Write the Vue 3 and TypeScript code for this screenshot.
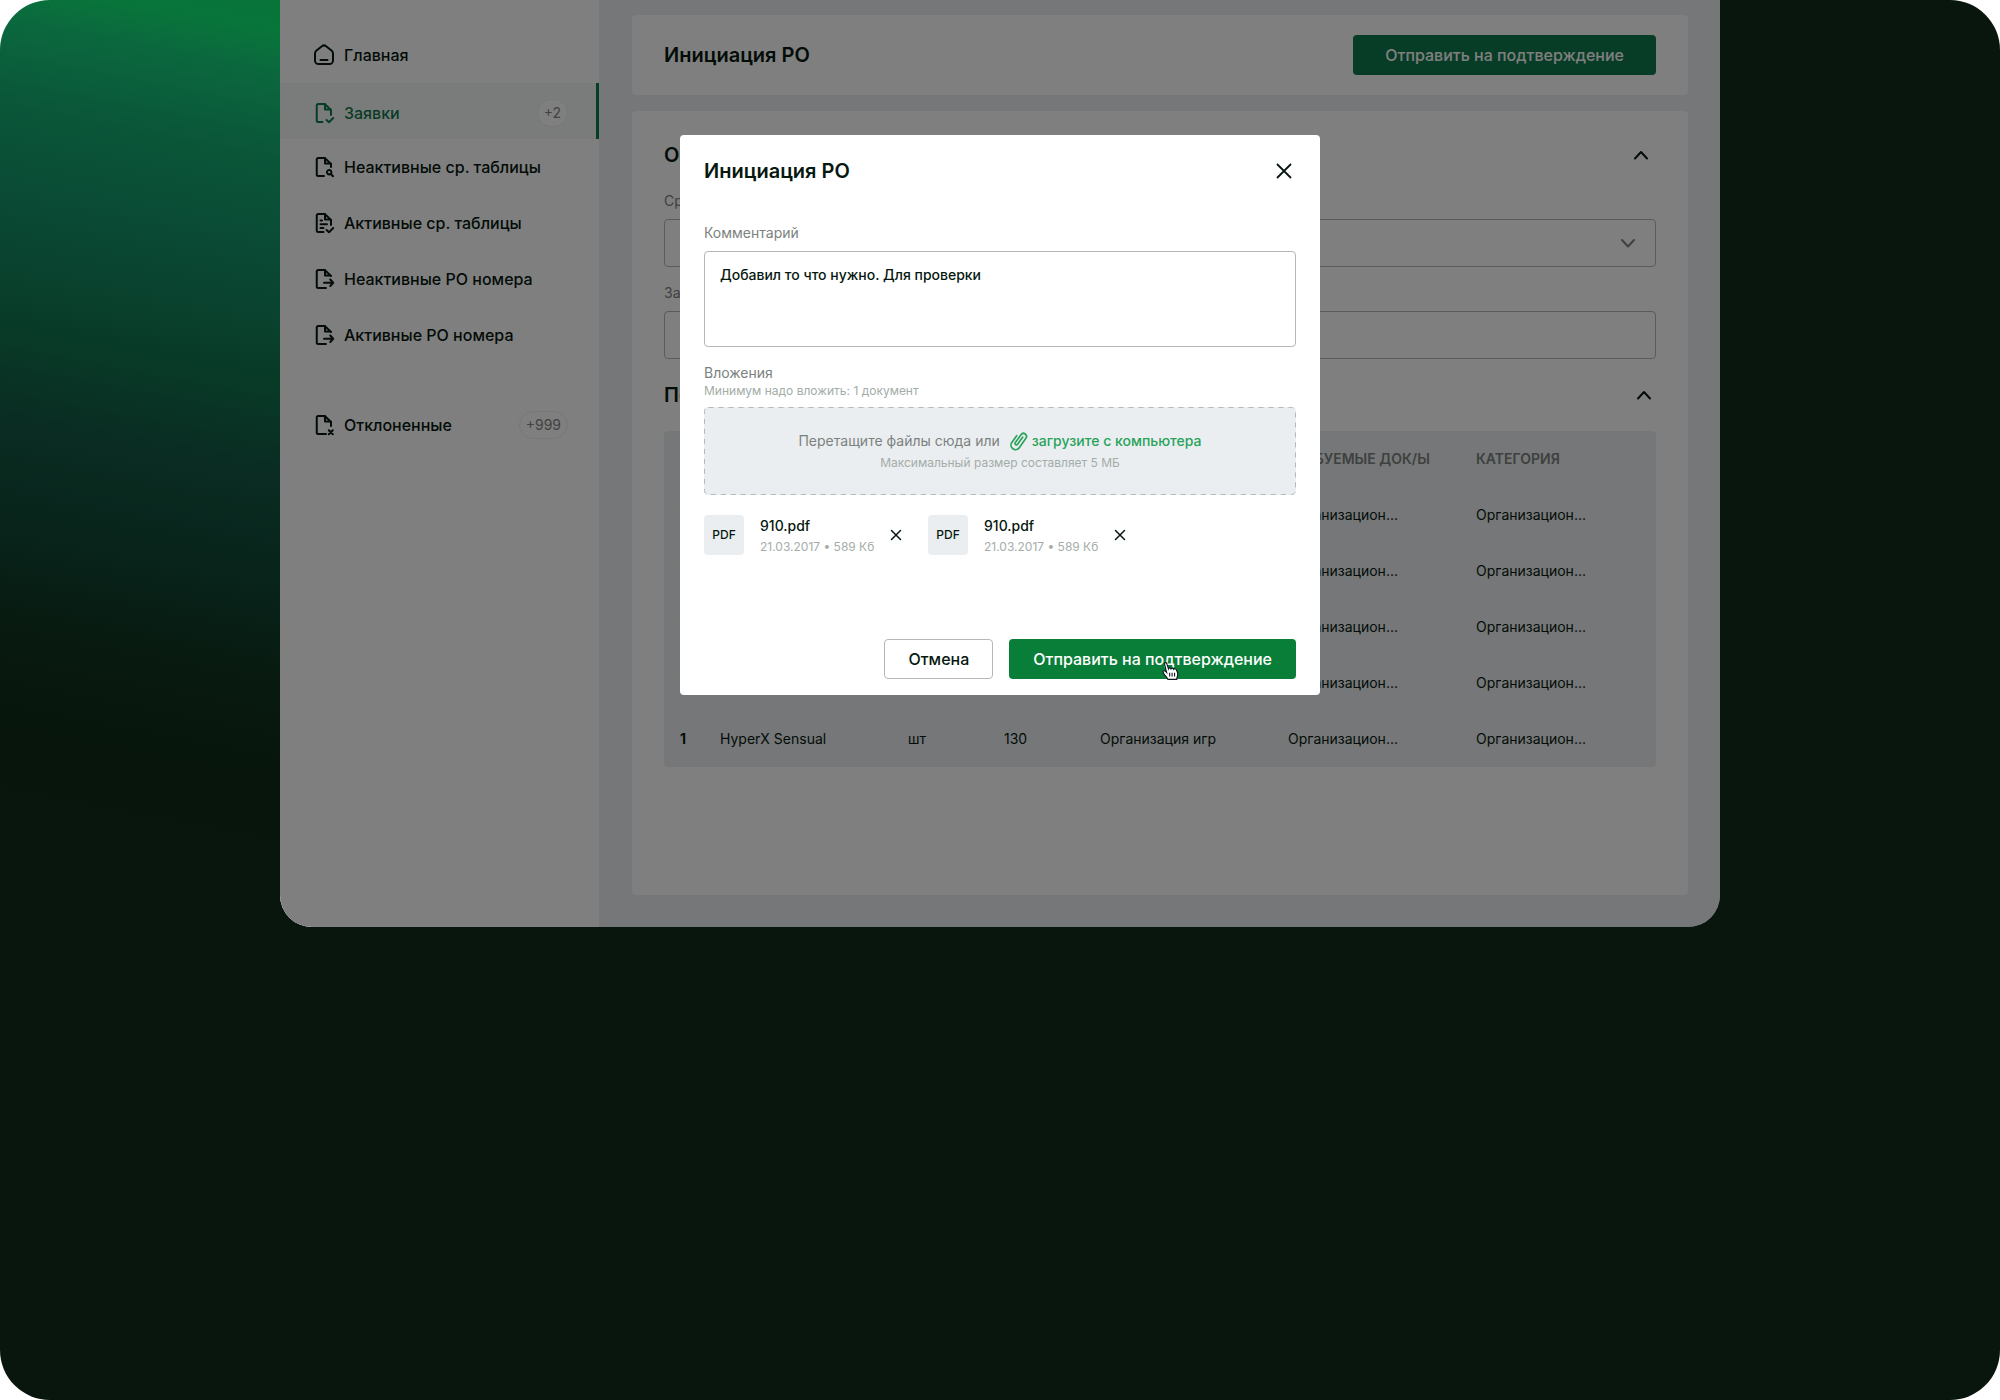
<script setup lang="ts">
import { ref } from 'vue'

type IconName = 'home' | 'check' | 'search' | 'list' | 'arrow' | 'cross'

interface NavItem {
  label: string
  icon: IconName
  badge?: string
  active?: boolean
  separated?: boolean
}

interface Attachment {
  id: number
  name: string
  meta: string
}

const nav: NavItem[] = [
  { label: 'Главная', icon: 'home' },
  { label: 'Заявки', icon: 'check', badge: '+2', active: true },
  { label: 'Неактивные ср. таблицы', icon: 'search' },
  { label: 'Активные ср. таблицы', icon: 'list' },
  { label: 'Неактивные РО номера', icon: 'arrow' },
  { label: 'Активные РО номера', icon: 'arrow' },
  { label: 'Отклоненные', icon: 'cross', badge: '+999', separated: true },
]

const icons: Record<IconName, string[]> = {
  home: [
    'M3 10.600c0-1.300.5-2.300 1.500-3.100l5.400-4.300a3.400 3.400 0 0 1 4.200 0l5.400 4.300c1 .8 1.500 1.800 1.500 3.100v6.800a3.600 3.600 0 0 1-3.600 3.600H6.600a3.600 3.600 0 0 1-3.600-3.600z',
    'M8.500 17h7',
  ],
  check: [
    'M10.500 21H6.250a1.500 1.500 0 0 1-1.500-1.500V4.500a1.500 1.500 0 0 1 1.500-1.500h6.500l6.250 6V14',
    'M13 3v5.500h5.500',
    'M14.500 19l2.500 2.250 4.250-4.250',
  ],
  search: [
    'M12 21H6.250a1.500 1.500 0 0 1-1.500-1.500V4.500a1.500 1.500 0 0 1 1.500-1.500h6.500l6.250 6V12',
    'M13 3v5.500h5.500',
    'M15 17.200a2.200 2.200 0 1 0 4.400 0a2.200 2.200 0 1 0-4.400 0M18.800 18.800l2.200 2.450',
  ],
  list: [
    'M11.500 21H6.250a1.500 1.500 0 0 1-1.500-1.500V4.500a1.500 1.500 0 0 1 1.500-1.500h6.500l6.250 6V14',
    'M13 3v5.500h5.500',
    'M8.500 9.500h1.500M8.500 13.250h6.500M8.500 17h3',
    'M14.500 19l2.500 2.250 4.250-4.250',
  ],
  arrow: [
    'M14 21H6.250a1.500 1.500 0 0 1-1.500-1.500V4.500a1.500 1.500 0 0 1 1.500-1.500h6.500l6.250 6',
    'M13 3v5.500h5.500',
    'M12 15.750h9M18.250 12.500l3 3.250-3 3.250',
  ],
  cross: [
    'M14 21H6.250a1.500 1.500 0 0 1-1.500-1.500V4.500a1.500 1.500 0 0 1 1.500-1.500h6.500l6.250 6V13',
    'M13 3v5.500h5.500',
    'M16.800 17.250l4 4M20.800 17.250l-4 4',
  ],
}

const columns: string[] = ['№', 'НАИМЕНОВАНИЕ', 'ЕД.', 'КОЛ-ВО', 'ОРГАНИЗАЦИЯ', 'ТРЕБУЕМЫЕ ДОК/Ы', 'КАТЕГОРИЯ']
const row: string[] = ['1', 'HyperX Sensual', 'шт', '130', 'Организация игр', 'Организацион...', 'Организацион...']
const rows: string[][] = Array.from({ length: 5 }, () => row)

const comment = ref('Добавил то что нужно. Для проверки')
const files = ref<Attachment[]>([
  { id: 1, name: '910.pdf', meta: '21.03.2017 • 589 Кб' },
  { id: 2, name: '910.pdf', meta: '21.03.2017 • 589 Кб' },
])

function removeFile(id: number): void {
  files.value = files.value.filter((file) => file.id !== id)
}
</script>

<template>
  <div class="page">
    <div class="window">
      <aside class="sidebar">
        <nav>
          <a
            v-for="item in nav"
            :key="item.label"
            href="#"
            class="nav-item"
            :class="{ 'nav-item--active': item.active, 'nav-item--separated': item.separated }"
          >
            <svg class="icon" viewBox="0 0 24 24" aria-hidden="true">
              <path v-for="d in icons[item.icon]" :key="d" :d="d" />
            </svg>
            <span class="nav-label">{{ item.label }}</span>
            <span v-if="item.badge" class="badge">{{ item.badge }}</span>
          </a>
        </nav>
      </aside>

      <main class="content">
        <header class="card topbar">
          <h1 class="title">Инициация РО</h1>
          <button type="button" class="btn btn--primary btn--wide">Отправить на подтверждение</button>
        </header>

        <section class="card details">
          <div class="section-head section-head--form">
            <h2 class="title">Основная информация</h2>
            <button type="button" class="icon-btn" aria-label="Свернуть">
              <svg class="icon" viewBox="0 0 24 24"><path d="M6 15.500l6-6.500 6 6.500" /></svg>
            </button>
          </div>

          <label class="label" for="compare-table">Сравнительная таблица</label>
          <div class="select-wrap">
            <select id="compare-table" class="field"><option></option></select>
            <svg class="icon select-arrow" viewBox="0 0 24 24" aria-hidden="true"><path d="M6 9l6 6.500 6-6.500" /></svg>
          </div>

          <label class="label label--next" for="heading">Заголовок</label>
          <input id="heading" class="field" type="text" />

          <div class="section-head section-head--table">
            <h2 class="title">Позиции</h2>
            <button type="button" class="icon-btn" aria-label="Свернуть">
              <svg class="icon" viewBox="0 0 24 24"><path d="M6 15.500l6-6.500 6 6.500" /></svg>
            </button>
          </div>

          <table class="table">
            <colgroup>
              <col class="col-num" />
              <col class="col-wide" />
              <col class="col-short" />
              <col class="col-short" />
              <col class="col-wide" />
              <col class="col-wide" />
              <col />
            </colgroup>
            <thead>
              <tr>
                <th v-for="column in columns" :key="column" scope="col">{{ column }}</th>
              </tr>
            </thead>
            <tbody>
              <tr v-for="(cells, index) in rows" :key="index">
                <td v-for="(cell, cellIndex) in cells" :key="cellIndex">{{ cell }}</td>
              </tr>
            </tbody>
          </table>
        </section>
      </main>

      <div class="overlay">
        <div class="modal" role="dialog" aria-modal="true" aria-labelledby="modal-title">
          <div class="modal-head">
            <h2 id="modal-title" class="title">Инициация РО</h2>
            <button type="button" class="icon-btn" aria-label="Закрыть">
              <svg class="icon icon--close" viewBox="0 0 24 24"><path d="M5.500 5.500l13 13M18.500 5.500l-13 13" /></svg>
            </button>
          </div>

          <label class="label" for="comment">Комментарий</label>
          <textarea id="comment" v-model="comment" class="comment"></textarea>

          <p class="label attachments-label">Вложения</p>
          <p class="hint">Минимум надо вложить: 1 документ</p>

          <div class="dropzone">
            <svg class="drop-border" aria-hidden="true"><rect x="0.5" y="0.5" rx="4" /></svg>
            <div class="drop-line">
              <span>Перетащите файлы сюда или</span>
              <button type="button" class="upload">
                <svg class="clip" viewBox="0 1 18 18" aria-hidden="true">
                  <path d="M13.200 6.600L8.600 13a1.300 1.300 0 0 1-2.100-1.500l5.200-7.200a2.700 2.700 0 0 1 4.400 3.200l-6.100 8.700a4.100 4.100 0 0 1-6.700-4.700l4.500-6.300" />
                </svg>
                <span>загрузите с компьютера</span>
              </button>
            </div>
            <p class="hint">Максимальный размер составляет 5 МБ</p>
          </div>

          <ul class="files">
            <li v-for="file in files" :key="file.id" class="file">
              <span class="file-type">PDF</span>
              <span class="file-info">
                <span class="file-name">{{ file.name }}</span>
                <span class="hint">{{ file.meta }}</span>
              </span>
              <button type="button" class="file-remove" aria-label="Удалить файл" @click="removeFile(file.id)">
                <svg class="icon-small" viewBox="0 0 16 16"><path d="M3.500 3.500l9 9M12.500 3.500l-9 9" /></svg>
              </button>
            </li>
          </ul>

          <div class="actions">
            <button type="button" class="btn btn--outline">Отмена</button>
            <button type="button" class="btn btn--primary btn--hover">
              Отправить на подтверждение
              <svg class="cursor" viewBox="0 0 16 18" aria-hidden="true">
                <path d="M5.200 16.500c-.3-1.200-1.200-2-2.200-3.200C1.900 12.200.8 10.700.8 9.700c0-.9 1.400-1.300 2.300-.3l1 1L2.200 2.900C1.900 1.600 3.700.9 4.200 2.300L5.700 7c.3-1.200 1.900-1.100 2.300.1.500-1.100 2-.8 2.400.4.600-.9 2-.6 2.400.5.400.9 1.400 2.500 1.300 4.100-.1 1.700-.9 2.600-.9 4.400z" />
                <path d="M6.800 10.500v3.500M9 10.500v3.500M11.200 10.500v3.500" />
              </svg>
            </button>
          </div>
        </div>
      </div>
    </div>
  </div>
</template>

<style>
body {
  margin: 0;
  background: #ffffff;
}
</style>

<style scoped>
* {
  box-sizing: border-box;
}

.page {
  min-height: 100vh;
  border-radius: 50px;
  color: #07180f;
  font-family: Inter, "Noto Sans", sans-serif;
  font-size: 14px;
  line-height: 20px;
  background:
    linear-gradient(
      191deg,
      #08743a 60px,
      #08753a 92px,
      #0b683e 132px,
      #0a5639 216px,
      #0a4834 324px,
      #083b27 432px,
      #0a2d23 520px,
      #08231a 638px,
      #08190f 740px,
      #07150c 840px,
      #09160d 950px
    )
    left top / 30% 100% no-repeat #09160d;
}

button,
input,
select,
textarea {
  font: inherit;
  color: inherit;
}

button {
  padding: 0;
  border: 0;
  background: none;
  cursor: pointer;
}

p,
h1,
h2,
ul {
  margin: 0;
  padding: 0;
}

.window {
  position: relative;
  display: flex;
  width: 72%;
  min-width: 1200px;
  margin: 0 auto;
  overflow: hidden;
  border-radius: 0 0 32px 32px;
  background: #ebeef1;
}

.icon {
  flex: none;
  display: block;
  width: 24px;
  height: 24px;
  fill: none;
  stroke: currentColor;
  stroke-width: 2;
  stroke-linecap: round;
  stroke-linejoin: round;
}

.icon--close {
  stroke-width: 1.8;
}

/* Sidebar */
.sidebar {
  flex: none;
  width: 319px;
  padding-top: 27px;
  background: #ffffff;
}

.nav-item {
  display: flex;
  align-items: center;
  gap: 8px;
  height: 56px;
  padding: 0 31px 0 32px;
  color: inherit;
  font-size: 16px;
  line-height: 24px;
  font-weight: 500;
  text-decoration: none;
}

.nav-item--active {
  padding-top: 4px;
  padding-right: 28px;
  border-right: 3px solid #0f7a4c;
  background: #f5f8f7;
  color: #0f7a4c;
}

.nav-item--separated {
  margin-top: 34px;
}

.nav-label {
  flex: 1;
}

.badge {
  min-width: 29px;
  padding: 0 6px;
  border: 1px solid #ebeef1;
  border-radius: 15px;
  background: #ffffff;
  color: #808682;
  font-size: 14px;
  line-height: 26px;
  font-weight: 400;
  text-align: center;
}

/* Page content */
.content {
  flex: 1;
  min-width: 0;
  padding: 15px 32px 32px 33px;
}

.card {
  border-radius: 4px;
  background: #ffffff;
}

.title {
  font-size: 20px;
  line-height: 24px;
  font-weight: 600;
}

.topbar {
  display: flex;
  align-items: center;
  justify-content: space-between;
  padding: 20px 32px;
}

.btn {
  height: 40px;
  padding: 0 24px;
  border-radius: 4px;
  font-size: 16px;
  line-height: 24px;
  font-weight: 500;
  white-space: nowrap;
}

.btn--primary {
  background: #0f7a4c;
  color: #ffffff;
}

.btn--wide {
  padding: 0 32px;
}

.btn--outline {
  padding: 0 23px;
  border: 1px solid #b4b9b6;
  background: #ffffff;
}

.btn--hover {
  position: relative;
  background: #097e38;
}

.details {
  margin-top: 16px;
  padding: 32px 32px 128px;
}

.section-head,
.modal-head {
  display: flex;
  align-items: center;
  justify-content: space-between;
  height: 24px;
}

.section-head--form {
  margin-bottom: 24px;
  padding-right: 3px;
}

.section-head--table {
  margin: 24px 0;
}

.label {
  display: block;
  margin-bottom: 8px;
  color: #7b827e;
  font-size: 14px;
  line-height: 20px;
}

.label--next {
  margin-top: 16px;
}

.select-wrap {
  position: relative;
}

.field {
  display: block;
  width: 100%;
  height: 48px;
  padding: 0 16px;
  border: 1px solid #b4b9b6;
  border-radius: 4px;
  background: #ffffff;
  appearance: none;
}

.select-arrow {
  position: absolute;
  top: 12px;
  right: 16px;
  color: #7b827e;
}

.table {
  width: 100%;
  border-spacing: 0;
  table-layout: fixed;
  border-radius: 4px;
  background: #ebeef1;
}

.col-num {
  width: 56px;
}

.col-wide {
  width: 188px;
}

.col-short {
  width: 96px;
}

.table th,
.table td {
  height: 56px;
  padding: 0;
  text-align: left;
  white-space: nowrap;
}

.table th {
  color: #7b827e;
  font-weight: 600;
}

.table th:first-child,
.table td:first-child {
  padding-left: 16px;
}

.table td:first-child {
  font-weight: 700;
}

/* Dialog */
.overlay {
  position: absolute;
  inset: 0;
  padding-top: 135px;
  background: rgba(0, 0, 0, 0.5);
}

.modal {
  width: 640px;
  margin: 0 auto;
  padding: 24px 24px 16px;
  border-radius: 4px;
  background: #ffffff;
}

.modal-head {
  margin-bottom: 40px;
}

.comment {
  display: block;
  width: 100%;
  height: 96px;
  padding: 13px 15px;
  border: 1px solid #b4b9b6;
  border-radius: 4px;
  outline: 0;
  resize: none;
  font-weight: 500;
}

.attachments-label {
  margin: 16px 0 0;
}

.hint {
  color: #a3ada8;
  font-size: 12px;
  line-height: 16px;
}

.dropzone {
  position: relative;
  display: flex;
  flex-direction: column;
  align-items: center;
  gap: 4px;
  margin-top: 8px;
  padding: 24px;
  border-radius: 4px;
  background: #ebeef1;
}

.drop-border {
  position: absolute;
  inset: 0;
  width: 100%;
  height: 100%;
  pointer-events: none;
}

.drop-border rect {
  width: calc(100% - 1px);
  height: calc(100% - 1px);
  fill: none;
  stroke: #b4b9b6;
  stroke-dasharray: 5 5;
}

.drop-line,
.upload {
  display: flex;
  align-items: center;
  height: 20px;
}

.drop-line {
  gap: 8px;
  color: #7b827e;
}

.upload {
  gap: 4px;
  color: #27a35a;
  font-weight: 500;
}

.clip {
  width: 20px;
  height: 20px;
  fill: none;
  stroke: currentColor;
  stroke-width: 1.5;
  stroke-linecap: round;
}

.files {
  display: flex;
  gap: 24px;
  margin-top: 20px;
  list-style: none;
}

.file {
  display: flex;
  align-items: center;
}

.file-type {
  width: 40px;
  margin-right: 16px;
  border-radius: 4px;
  background: #ebeef1;
  font-size: 12px;
  line-height: 40px;
  font-weight: 500;
  text-align: center;
}

.file-info {
  display: flex;
  flex-direction: column;
  gap: 4px;
  width: 116px;
  margin-right: 12px;
  white-space: nowrap;
}

.file-name {
  font-weight: 500;
}

.file-info .hint {
  line-height: 14px;
}

.icon-small {
  display: block;
  width: 16px;
  height: 16px;
  fill: none;
  stroke: currentColor;
  stroke-width: 1.5;
  stroke-linecap: round;
}

.actions {
  display: flex;
  justify-content: flex-end;
  gap: 16px;
  margin-top: 84px;
}

.cursor {
  position: absolute;
  top: 22px;
  left: 153px;
  width: 18px;
  height: 20px;
  fill: #ffffff;
  stroke: #10141c;
  stroke-width: 1;
}
</style>
